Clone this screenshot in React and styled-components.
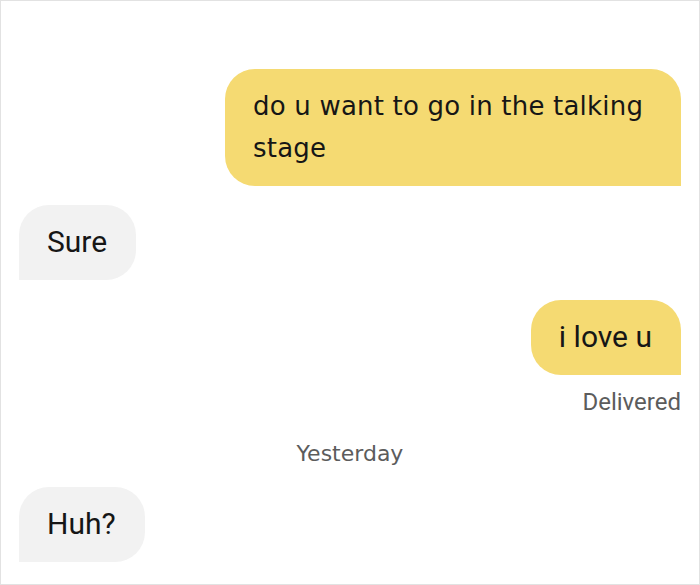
import React from 'react'
import styled, {createGlobalStyle} from 'styled-components'

const Global = createGlobalStyle`
    html, body {
        margin: 0;
        padding: 0;
        background: #ffffff;
    }
`

const messages = [
    {id: 1, mine: true, text: 'do u want to go in the talking stage', font: 'geo', space: 68},
    {id: 2, mine: false, text: 'Sure', space: 19},
    {id: 3, mine: true, text: 'i love u', space: 20},
]

const App = () => {
    return (
        <Page>
            <Global />
            <Thread>
                {messages.map((m) => (
                    <Row key={m.id} mine={m.mine} space={m.space}>
                        <Bubble mine={m.mine} geo={m.font === 'geo'}>{m.text}</Bubble>
                    </Row>
                ))}
                <Status>Delivered</Status>
                <DayStamp>Yesterday</DayStamp>
                <Row space={19}>
                    <Bubble>Huh?</Bubble>
                </Row>
            </Thread>
        </Page>
    )
}
export default App

const Page = styled.div`
    width: 700px;
    height: 585px;
    box-sizing: border-box;
    border: 1px solid #e2e2e2;
    background: #ffffff;
    overflow: hidden;
`

const Thread = styled.div`
    display: flex;
    flex-direction: column;
    padding: 0 18px 0 18px;
`

const Row = styled.div`
    display: flex;
    justify-content: ${(p) => (p.mine ? 'flex-end' : 'flex-start')};
    margin-top: ${(p) => p.space || 0}px;
`

const Bubble = styled.div`
    box-sizing: border-box;
    max-width: 456px;
    padding: 16px 29px 17px 28px;
    line-height: 42px;
    font-family: ${(p) => (p.geo ? '"DejaVu Sans", "Open Sans", sans-serif' : 'Roboto, "Liberation Sans", sans-serif')};
    font-size: ${(p) => (p.geo ? '26px' : '30px')};
    letter-spacing: ${(p) => (p.geo ? '0.2px' : '0')};
    color: #161616;
    background-color: ${(p) => (p.mine ? '#f5da72' : '#f2f2f2')};
    border-radius: ${(p) => (p.mine ? '30px 30px 0 30px' : '30px 30px 30px 0')};
`

const Status = styled.div`
    margin-top: 13px;
    align-self: flex-end;
    font-family: Roboto, "Liberation Sans", sans-serif;
    font-size: 24px;
    line-height: 28px;
    color: #5c5c5c;
`

const DayStamp = styled.div`
    margin-top: 24px;
    align-self: center;
    font-family: "DejaVu Sans", "Open Sans", sans-serif;
    font-size: 22px;
    line-height: 28px;
    color: #5c5c5c;
`
